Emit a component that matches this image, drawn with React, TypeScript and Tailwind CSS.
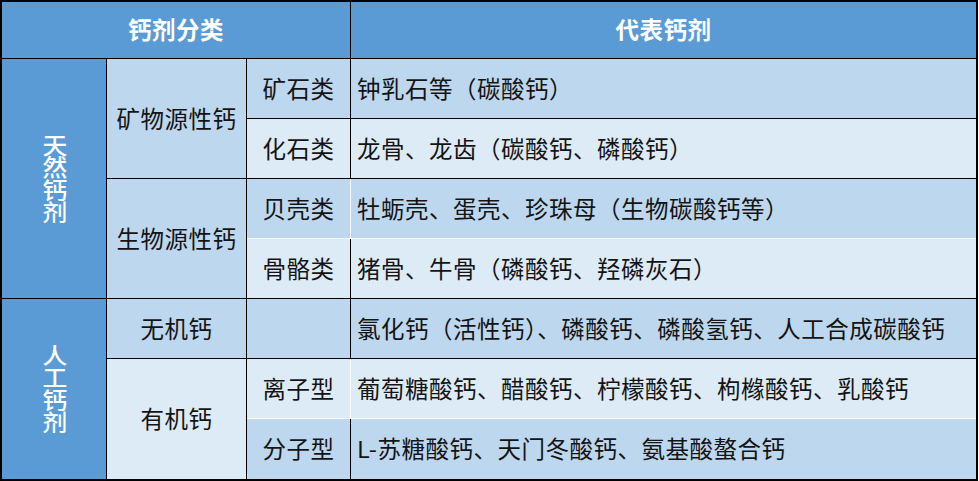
import React from 'react';

type Row = {
  sub: string;
  items: string;
  dark: boolean;
  line: 'black' | 'white' | 'none';
};

const rows: Row[] = [
  { sub: '矿石类', items: '钟乳石等（碳酸钙）', dark: true, line: 'black' },
  { sub: '化石类', items: '龙骨、龙齿（碳酸钙、磷酸钙）', dark: false, line: 'black' },
  { sub: '贝壳类', items: '牡蛎壳、蛋壳、珍珠母（生物碳酸钙等）', dark: true, line: 'white' },
  { sub: '骨骼类', items: '猪骨、牛骨（磷酸钙、羟磷灰石）', dark: false, line: 'black' },
  { sub: '', items: '氯化钙（活性钙）、磷酸钙、磷酸氢钙、人工合成碳酸钙', dark: true, line: 'black' },
  { sub: '离子型', items: '葡萄糖酸钙、醋酸钙、柠檬酸钙、枸橼酸钙、乳酸钙', dark: false, line: 'white' },
  { sub: '分子型', items: 'L-苏糖酸钙、天门冬酸钙、氨基酸螯合钙', dark: true, line: 'none' },
];

const rowStart = [
  'row-start-2',
  'row-start-3',
  'row-start-4',
  'row-start-5',
  'row-start-6',
  'row-start-7',
  'row-start-8',
];

const lineClass = {
  black: 'border-b border-black',
  white: 'border-b border-white/80',
  none: '',
};

// stacked label in the first column
function VerticalLabel({ text }: { text: string }) {
  return (
    <div className="scale-x-110 text-[22.5px] font-medium tracking-normal text-white [text-orientation:upright] [writing-mode:vertical-rl]">
      {text}
    </div>
  );
}

export default function App() {
  return (
    <div
      className="grid h-[481px] w-[978px] grid-cols-[105px_140px_104px_625px] grid-rows-[57px_repeat(7,60px)] border-2 border-black bg-white text-[23.5px] tracking-[0.5px] text-[#141414]"
      style={{ fontFamily: '"Noto Sans CJK SC", "Noto Sans", sans-serif' }}
    >
      {/* header */}
      <div className="col-span-3 col-start-1 row-start-1 flex items-center justify-center border-r border-b border-black bg-[#5b9bd5] font-bold text-white">
        钙剂分类
      </div>
      <div className="col-start-4 row-start-1 flex items-center justify-center border-b border-black bg-[#5b9bd5] font-bold text-white">
        代表钙剂
      </div>

      {/* first column */}
      <div className="col-start-1 row-span-4 row-start-2 flex items-center justify-center border-r border-b border-black bg-[#5b9bd5]">
        <VerticalLabel text="天然钙剂" />
      </div>
      <div className="col-start-1 row-span-3 row-start-6 flex items-center justify-center border-r border-black bg-[#5b9bd5]">
        <VerticalLabel text="人工钙剂" />
      </div>

      {/* second column */}
      <div className="col-start-2 row-span-2 row-start-2 flex items-center justify-center border-r border-b border-black bg-[#bdd7ee]">
        矿物源性钙
      </div>
      <div className="col-start-2 row-span-2 row-start-4 flex items-center justify-center border-r border-b border-black bg-[#bdd7ee]">
        生物源性钙
      </div>
      <div className="col-start-2 row-start-6 flex items-center justify-center border-r border-b border-black bg-[#bdd7ee]">
        无机钙
      </div>
      <div className="col-start-2 row-span-2 row-start-7 flex items-center justify-center border-r border-black bg-[#ddebf7]">
        有机钙
      </div>

      {/* sub category + examples */}
      {rows.map((r, i) => {
        const bg = r.dark ? 'bg-[#bdd7ee]' : 'bg-[#ddebf7]';
        return (
          <React.Fragment key={i}>
            <div
              className={`col-start-3 ${rowStart[i]} flex items-center justify-center border-r border-black ${lineClass[r.line]} ${bg}`}
            >
              {r.sub}
            </div>
            <div
              className={`col-start-4 ${rowStart[i]} flex items-center whitespace-nowrap pl-[6px] ${lineClass[r.line]} ${bg}`}
            >
              {r.items}
            </div>
          </React.Fragment>
        );
      })}
    </div>
  );
}
